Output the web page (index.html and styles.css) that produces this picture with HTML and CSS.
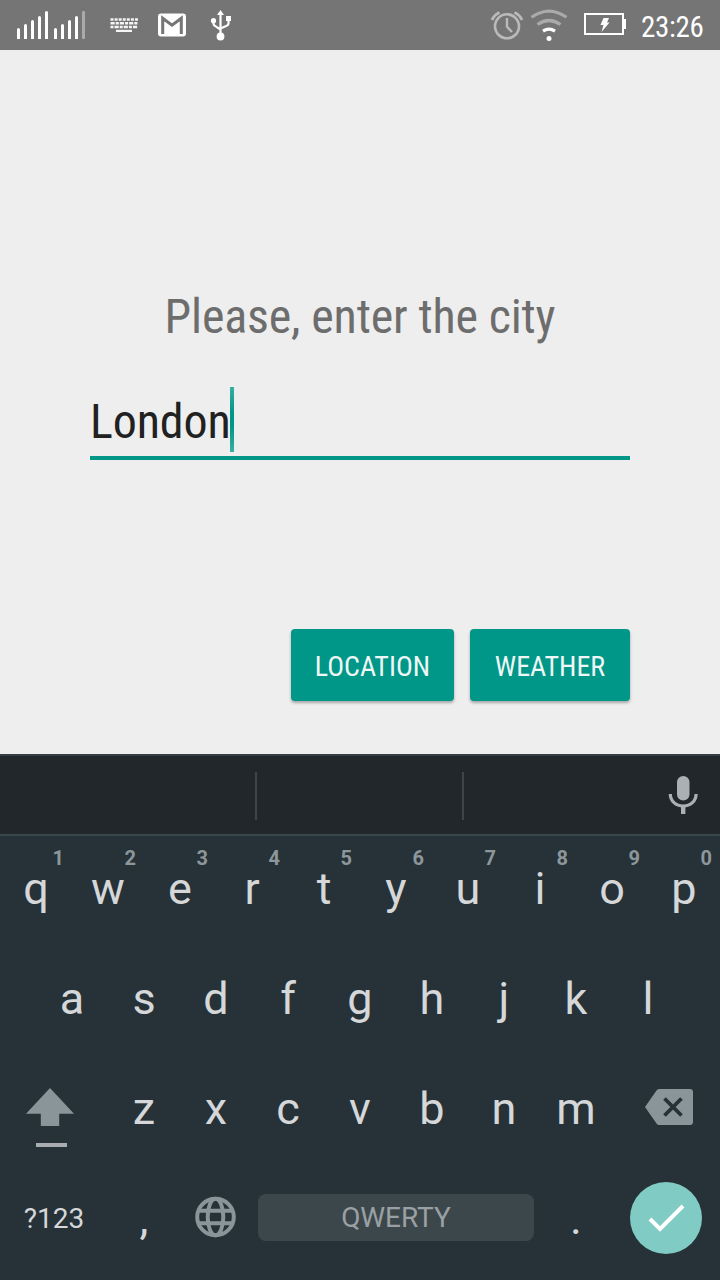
FILE: index.html
```html
<!DOCTYPE html>
<html lang="en">
<head>
<meta charset="utf-8">
<title>City</title>
<link rel="stylesheet" href="styles.css">
</head>
<body>
<div class="screen">
  <header class="status">
    <svg class="status-icons" width="240" height="50" viewBox="0 0 240 50" fill="#fff">
      <path d="M17 29.500q0-1.500 1.500-1.500t1.500 1.500V39h-3zM24 25.500q0-1.500 1.500-1.500t1.500 1.500V39h-3zM31 21.500q0-1.500 1.500-1.500t1.500 1.500V39h-3zM38 17.500q0-1.500 1.500-1.500t1.500 1.500V39h-3zM45 12.500q0-1.500 1.500-1.500t1.500 1.500V39h-3zM54 29.500q0-1.500 1.500-1.500t1.500 1.500V39h-3zM61 25.500q0-1.500 1.500-1.500t1.500 1.500V39h-3zM68 21.500q0-1.500 1.500-1.500t1.500 1.500V39h-3zM75 17.500q0-1.500 1.500-1.500t1.500 1.500V39h-3z"/>
      <rect x="82" y="11" width="3" height="28" rx="1" fill="#aaa"/>
      <g fill="none" stroke="#f5f5f5" stroke-width="2.600">
        <path d="M110.500 19.500h27.500" stroke-dasharray="3 1.080"/>
        <path d="M110.500 23.200h27.500" stroke-dasharray="4.200 1 3.100 1"/>
        <path d="M110.500 27h27.500" stroke-dasharray="3 1 4.200 1"/>
        <path d="M116 30.900h16" stroke-width="2.200"/>
      </g>
      <rect x="158" y="13.500" width="28" height="23" rx="3"/>
      <path d="M162.700 34V18.200L172 25.200l9.300-7V34" fill="none" stroke="#757575" stroke-width="3"/>
      <g fill="none" stroke="#fff" stroke-width="2.200">
        <path d="M220.500 36V14M213.500 21v2.500q0 1.800 1.800 2.600l5.200 3.400M228.500 20v3.500q0 1.500-1.800 2.200l-6.200 2.800"/>
      </g>
      <path d="M220.500 10l3.500 5h-7z"/><circle cx="220.500" cy="36.500" r="3.900"/><circle cx="213.500" cy="20.700" r="2.600"/><path d="M226 16h5v5h-5z"/>
    </svg>
    <svg class="status-icons" width="150" height="50" viewBox="485 0 150 50" fill="none">
      <g stroke="#bababa" stroke-width="2.600">
        <circle cx="507" cy="26.300" r="12"/>
        <path d="M507 18v8.800l5 5.200" stroke-width="2.400"/>
        <path d="M492 20q2-5 7.500-7.500M514.500 12.500q5.500 2.500 7.500 7.500" stroke-width="2.800"/>
      </g>
      <path d="M531.500 17.300q17.500-12.500 35 0" stroke="#aaa" stroke-width="3.200"/>
      <path d="M537.500 24.500q11.500-8 23 0" stroke="#aaa" stroke-width="3.200"/>
      <path d="M543 31.200q6-4 12 0" stroke="#fff" stroke-width="3.200"/>
      <circle cx="549" cy="38.500" r="2.500" fill="#fff"/>
      <rect x="585" y="14" width="38" height="20" stroke="#fff" stroke-width="2"/>
      <path d="M623.500 19h2.500v10h-2.500zM603.500 18h5.500l-2 4.500h2.500L601.500 32l2-7h-3z" fill="#fff"/>
    </svg>
    <time class="clock">23:26</time>
  </header>

  <main class="form">
    <h1 class="prompt">Please, enter the city</h1>
    <div class="field"><span class="value">London</span><span class="caret"></span></div>
    <div class="actions">
      <button class="btn location">LOCATION</button>
      <button class="btn weather">WEATHER</button>
    </div>
  </main>

  <section class="keyboard">
    <div class="suggestions">
      <span class="slot first"></span><span class="slot second"></span>
      <svg class="mic" width="30" height="40" viewBox="0 0 30 40">
        <rect x="9" y="1" width="12.500" height="24.500" rx="6.250" fill="#a9b1b5"/>
        <path d="M2.300 19c0 7 5.600 12 12.900 12s12.900-5 12.900-12M15.200 30.500V39" fill="none" stroke="#a9b1b5" stroke-width="3.200"/>
        <path d="M15.200 31v8" stroke="#a9b1b5" stroke-width="4.400"/>
      </svg>
    </div>
    <div class="row">
      <span class="key">q<sup>1</sup></span><span class="key">w<sup>2</sup></span><span class="key">e<sup>3</sup></span><span class="key">r<sup>4</sup></span><span class="key">t<sup>5</sup></span><span class="key">y<sup>6</sup></span><span class="key">u<sup>7</sup></span><span class="key">i<sup>8</sup></span><span class="key">o<sup>9</sup></span><span class="key">p<sup>0</sup></span>
    </div>
    <div class="row">
      <span class="key">a</span><span class="key">s</span><span class="key">d</span><span class="key">f</span><span class="key">g</span><span class="key">h</span><span class="key">j</span><span class="key">k</span><span class="key">l</span>
    </div>
    <div class="row">
      <svg class="side" width="108" height="110" viewBox="0 0 108 110">
        <path d="M50 32l24 25.700H59.200V70H40.800V57.700H26z" fill="#8a959a"/>
        <path d="M36 87h31v4H36z" fill="#a9adb2"/>
      </svg>
      <span class="key">z</span><span class="key">x</span><span class="key">c</span><span class="key">v</span><span class="key">b</span><span class="key">n</span><span class="key">m</span>
      <svg class="side" width="108" height="110" viewBox="612 0 108 110">
        <path d="M659 33h31q3 0 3 3v30q0 3-3 3h-31q-1.500 0-2.500-1.500L645 51l11.500-16.500Q657.500 33 659 33z" fill="#8a959a"/>
        <path d="M664.500 42.500l17 17M681.500 42.500l-17 17" stroke="#263238" stroke-width="3.800"/>
      </svg>
    </div>
    <div class="row bottom">
      <span class="symbols">?123</span>
      <span class="key comma">,</span>
      <svg class="globe" width="72" height="114" viewBox="180 0 72 114" fill="none" stroke="#8a959a" stroke-width="4">
        <circle cx="215.500" cy="51" r="18.300"/><ellipse cx="215.500" cy="51" rx="7.800" ry="18.300"/>
        <path d="M199 44.800h33M199 57.200h33"/>
      </svg>
      <span class="space">QWERTY</span>
      <span class="key dot">.</span>
      <span class="enter"><svg width="72" height="72" viewBox="0 0 72 72" fill="none"><path d="M20 37l10 10 23-23" stroke="#fff" stroke-width="4"/></svg></span>
    </div>
  </section>
</div>
</body>
</html>
```
FILE: styles.css
```css
* { box-sizing: border-box; }
body { margin: 0; font-family: "Roboto", sans-serif; }
.screen { width: 720px; height: 1280px; display: flex; flex-direction: column; background: #eee; overflow: hidden; }
.status { height: 50px; background: #757575; display: flex; align-items: center; flex: none; }
.status-icons { flex: none; }
.status-icons + .status-icons { margin-left: 245px; }
.clock, .prompt, .value, .btn { font-family: "Roboto Condensed", "Roboto", sans-serif; font-stretch: condensed; font-weight: 400; }
.clock { color: #fff; font-size: 29px; line-height: 50px; letter-spacing: -0.3px; margin: 3px 0 0 6px; }
.form { height: 704px; padding: 235px 90px 0; flex: none; }
.prompt { margin: 0; font-size: 48px; line-height: 64px; letter-spacing: -0.16px; text-align: center; color: #6d6d6d; white-space: nowrap; }
.field { margin-top: 32px; height: 79px; padding: 6px 0 0; border-bottom: 4px solid #009688; display: flex; }
.value { font-size: 48px; line-height: 70px; letter-spacing: -0.1px; color: #212121; }
.caret { width: 4px; height: 65px; margin-left: -0.6px; background: linear-gradient(#3aaea2, #009688 40%, #009688 60%, #3aaea2); }
.actions { display: flex; gap: 16px; justify-content: flex-end; margin-top: 169px; }
.btn { height: 72px; padding: 3px 0 0; border: 0; border-radius: 4px; background: #009688; color: #eef7f6; font-size: 28px; box-shadow: 0 2px 3px rgba(0,0,0,.3); }
.location { width: 163px; }
.weather { width: 160px; }
.keyboard { flex: 1; background: #263238; color: #d5d7d9; }
.suggestions { height: 82px; background: #21272b; border-top: 2px solid #373f43; border-bottom: 2px solid #37474b; display: flex; align-items: center; }
.slot { height: 48px; border-right: 2px solid #3e4447; margin-top: 1px; }
.first { width: 257px; }
.second { width: 207px; }
.mic { margin-left: 204px; }
.row { height: 110px; display: flex; justify-content: center; }
.key { width: 72px; text-align: center; font-size: 45px; line-height: 105px; position: relative; }
.key sup { position: absolute; right: 8px; top: 10px; font-size: 20px; line-height: 24px; font-weight: 700; color: #8d969a; }
.side { flex: none; }
.bottom { height: 114px; justify-content: flex-start; }
.symbols { width: 108px; text-align: center; font-size: 28px; line-height: 105px; }
.space { width: 276px; height: 47px; margin: 28px 0 0 6px; border-radius: 8px; background: #3c474c; color: #9aa0a3; font-size: 28px; line-height: 47px; text-align: center; }
.dot { margin-left: 6px; }
.enter { width: 72px; height: 72px; margin: 16px 0 0 18px; border-radius: 50%; background: #80cbc4; }
```
